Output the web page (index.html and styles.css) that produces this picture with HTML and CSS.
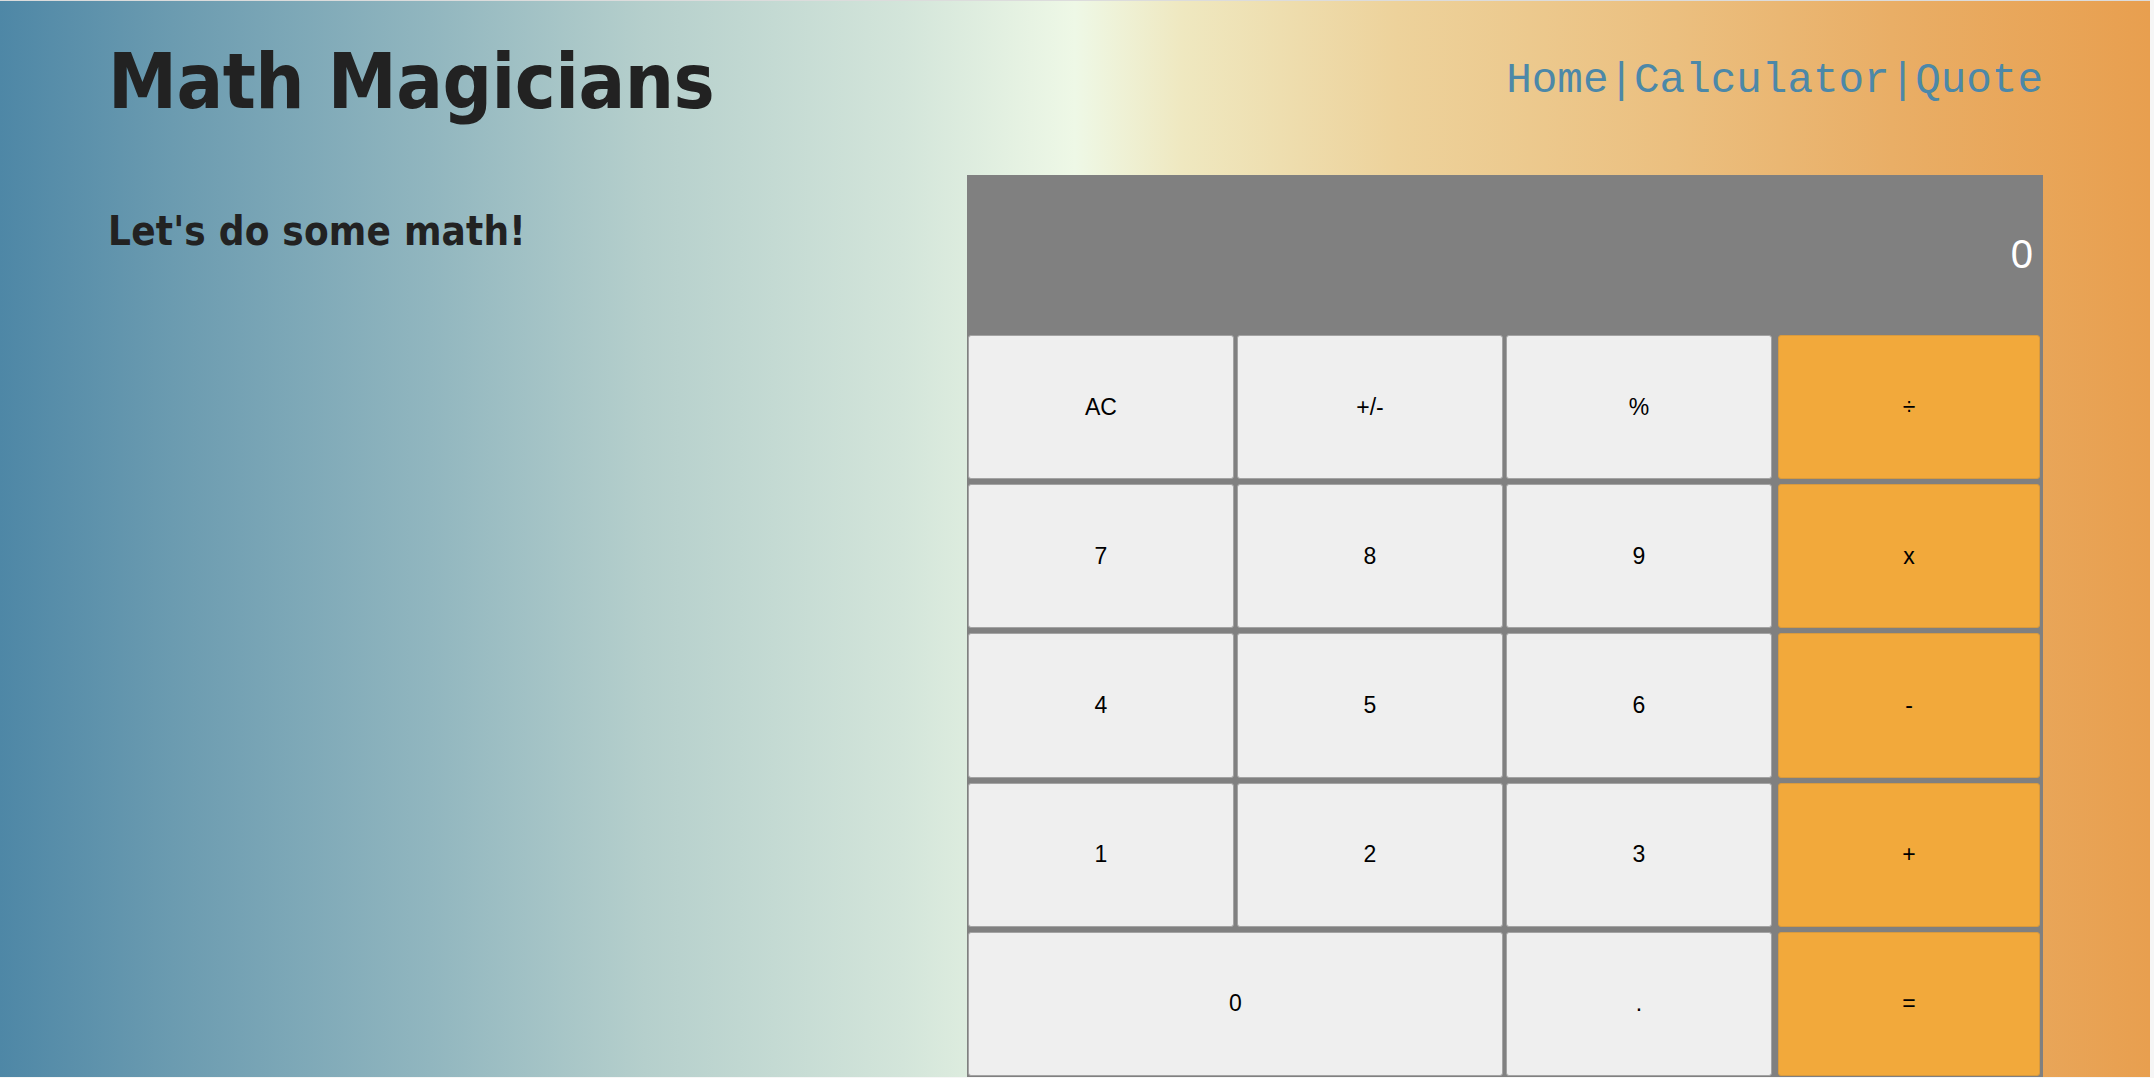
FILE: index.html
```html
<!DOCTYPE html>
<html lang="en">
<head>
<meta charset="utf-8">
<title>Math Magicians</title>
<link rel="stylesheet" href="styles.css">
</head>
<body>
<div class="page">
  <header class="header">
    <h1 class="title">Math Magicians</h1>
    <nav class="nav">
      <a class="nav-link" href="#">Home</a><span class="sep">|</span><a class="nav-link" href="#">Calculator</a><span class="sep">|</span><a class="nav-link" href="#">Quote</a>
    </nav>
  </header>
  <main class="main">
    <section class="intro">
      <h2 class="subtitle">Let's do some math!</h2>
    </section>
    <section class="calculator">
      <div class="display">0</div>
      <div class="keys">
        <button class="key">AC</button>
        <button class="key">+/-</button>
        <button class="key">%</button>
        <button class="key op">÷</button>
        <button class="key">7</button>
        <button class="key">8</button>
        <button class="key">9</button>
        <button class="key op">x</button>
        <button class="key">4</button>
        <button class="key">5</button>
        <button class="key">6</button>
        <button class="key op">-</button>
        <button class="key">1</button>
        <button class="key">2</button>
        <button class="key">3</button>
        <button class="key op">+</button>
        <button class="key wide">0</button>
        <button class="key">.</button>
        <button class="key op">=</button>
      </div>
    </section>
  </main>
</div>
</body>
</html>
```
FILE: styles.css
```css
html, body {
  margin: 0;
  padding: 0;
}

body {
  background: #f6f6f6;
  height: 1078px;
  overflow: hidden;
}

.page {
  margin-right: 4px;
  height: 1077px;
  border-top: 1px solid #dcdcdc;
  box-sizing: border-box;
  padding: 0 107px 0 108px;
  background: linear-gradient(to right,
    #4e87a6 0%,
    #6b9bb0 8%,
    #91b6bf 20%,
    #b5cfcc 30%,
    #d3e5da 42%,
    #eef8e6 50%,
    #efe8c0 55%,
    #edd29b 65%,
    #ebbf7f 78%,
    #e9ae66 88%,
    #e89f4f 100%);
  overflow: hidden;
}

.header {
  display: flex;
  justify-content: space-between;
  align-items: flex-start;
  padding-top: 42px;
}

.title {
  margin: 0;
  font-family: "DejaVu Sans Condensed", "DejaVu Sans", sans-serif;
  font-weight: bold;
  font-size: 77px;
  line-height: 1;
  letter-spacing: -0.5px;
  color: #222222;
}

.nav {
  margin-top: 17px;
  font-family: "Liberation Mono", "Courier New", monospace;
  font-size: 42.6px;
  line-height: 1;
  color: #4c88a8;
}

.nav-link {
  color: #4c88a8;
  text-decoration: none;
}

.main {
  display: flex;
  margin-top: 55px;
}

.intro {
  flex: 1;
}

.subtitle {
  margin: 36px 0 0;
  font-family: "DejaVu Sans Condensed", "DejaVu Sans", sans-serif;
  font-weight: bold;
  font-size: 40px;
  line-height: 1;
  letter-spacing: 0.2px;
  color: #222222;
}

.calculator {
  width: 1076px;
  background: #808080;
}

.display {
  height: 159px;
  display: flex;
  align-items: center;
  justify-content: flex-end;
  padding-right: 10px;
  box-sizing: border-box;
  font-family: "Liberation Sans", Arial, sans-serif;
  font-size: 40px;
  color: #ffffff;
}

.keys {
  display: grid;
  grid-template-columns: repeat(4, 1fr);
  grid-auto-rows: 149.2px;
}

.key {
  margin: 1px 2px 4px 1px;
  border: 1px solid #a3a3a3;
  border-radius: 3px;
  background: #efefef;
  font-family: "Liberation Sans", Arial, sans-serif;
  font-size: 23px;
  color: #000000;
  padding: 0;
}

.key.op {
  background: #f2a93b;
  border-color: #d89a3e;
  margin-left: 4px;
  margin-right: 3px;
}

.key.wide {
  grid-column: span 2;
}
```
